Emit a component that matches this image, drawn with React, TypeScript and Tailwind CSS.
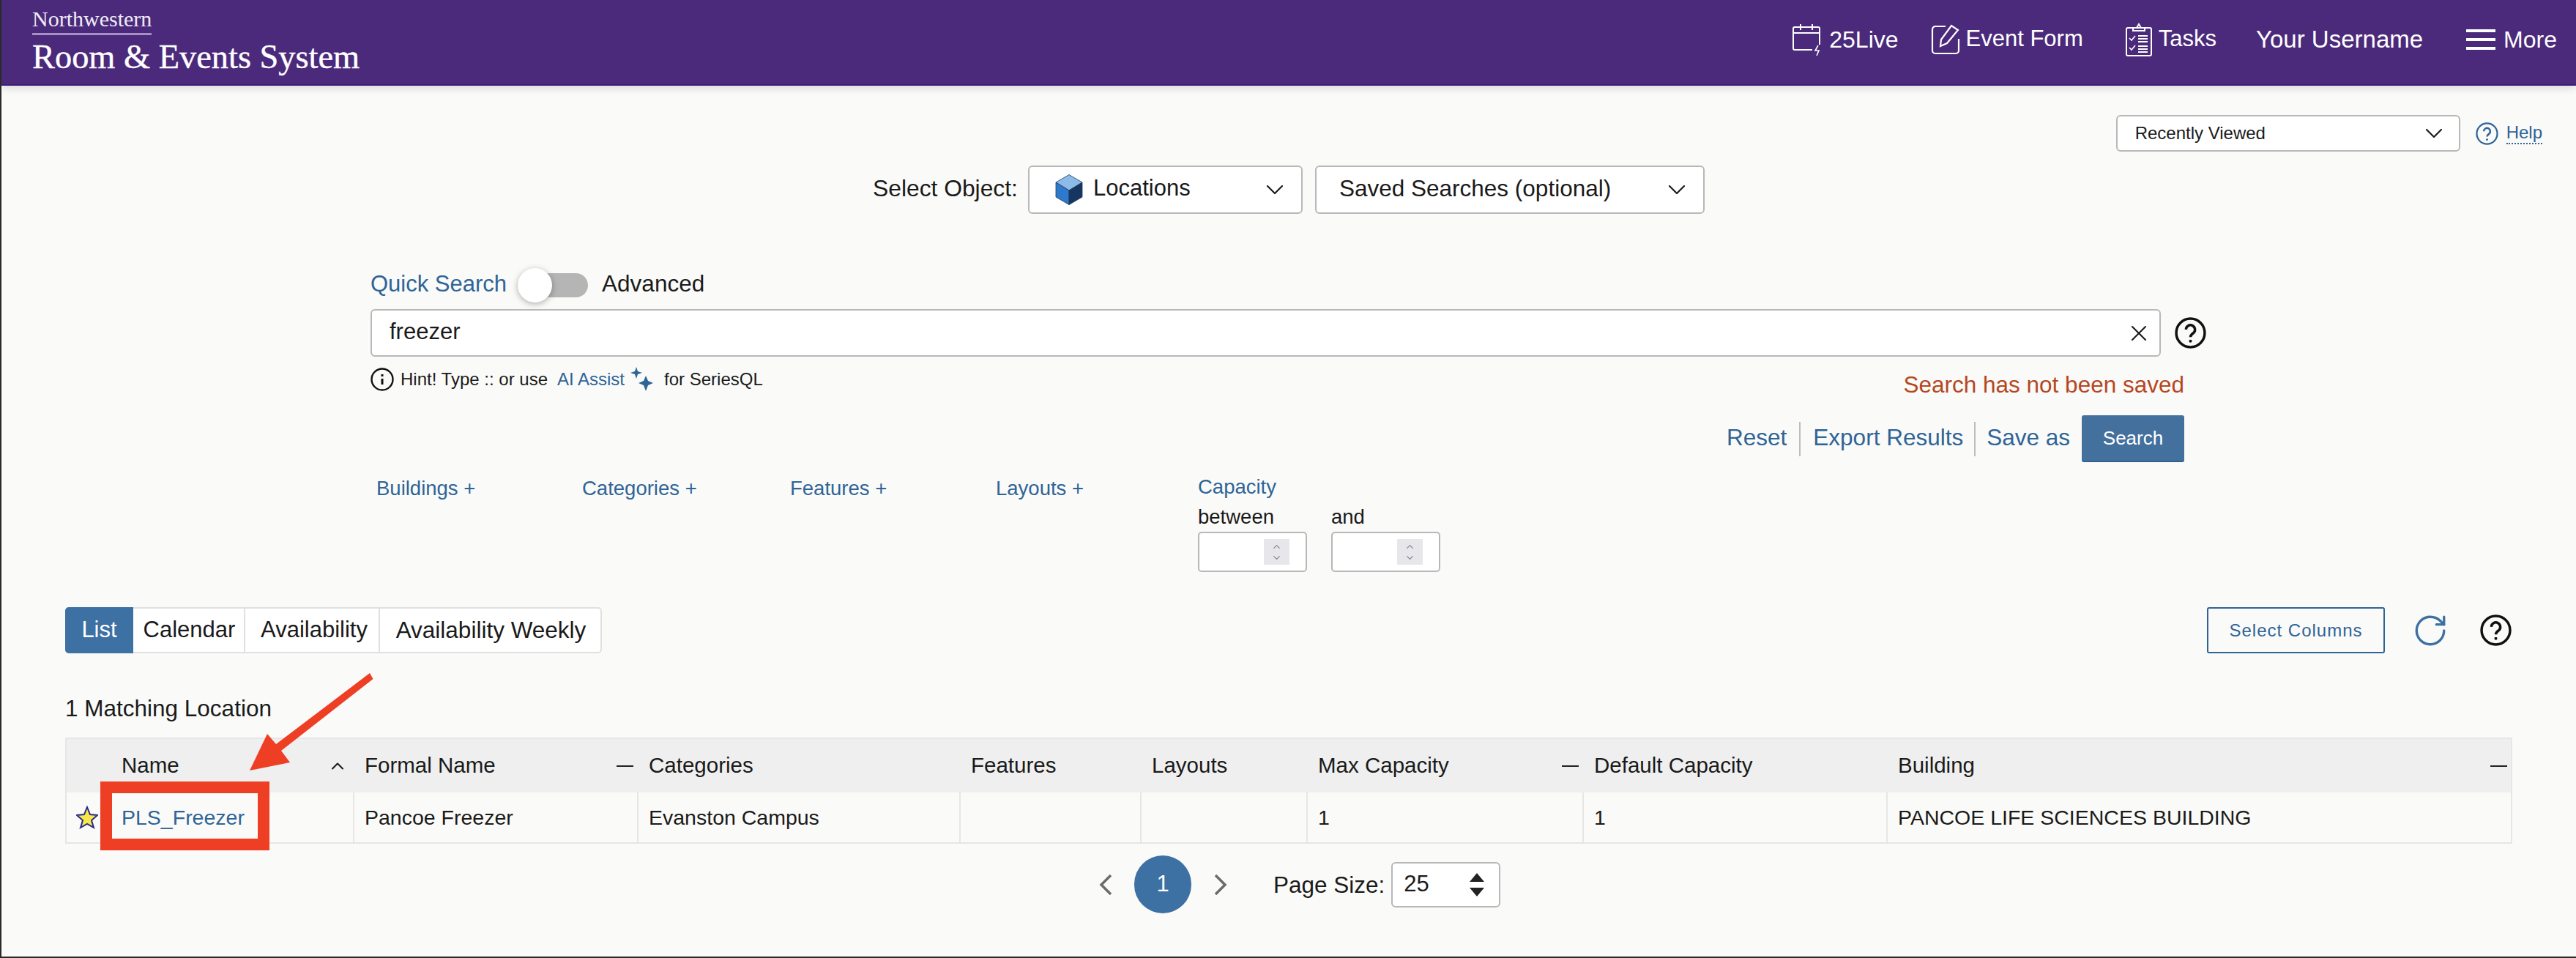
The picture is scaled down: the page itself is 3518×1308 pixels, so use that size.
import React from "react";
import { ChevronDown, ChevronUp, RotateCw, X } from "lucide-react";

function CalendarBolt() {
  return (
    <svg width="42" height="44" viewBox="0 0 42 44" fill="none" stroke="white" strokeWidth="2">
      <path d="M27 36H3a2 2 0 0 1-2-2V7a2 2 0 0 1 2-2h32a2 2 0 0 1 2 2v22" />
      <path d="M1 13h36M11 1v8M27 1v8" />
      <path d="M35 30l-4 7h5l-3 7" strokeWidth="1.6" />
    </svg>
  );
}

function EditBox() {
  return (
    <svg width="42" height="42" viewBox="0 0 42 42" fill="none" stroke="white" strokeWidth="2.2">
      <path d="M20 3H6a4 4 0 0 0-4 4v29a4 4 0 0 0 4 4h28a4 4 0 0 0 4-4V20" />
      <path d="M13 30l1-9L28 2l9 6-15 18z" />
    </svg>
  );
}

function Clipboard() {
  return (
    <svg width="36" height="46" viewBox="0 0 36 46" fill="none" stroke="white" strokeWidth="2">
      <rect x="1" y="7" width="34" height="38" rx="2" />
      <path d="M10 11V7h5l3-5 3 5h5v4z" />
      <path d="M5 21l3 3 5-6M5 34l3 3 5-6" strokeWidth="1.6" />
      <path d="M17 18h13M17 22h13M17 26h13M17 32h13M17 36h13M17 40h13" strokeWidth="1.8" />
    </svg>
  );
}

function Hamburger() {
  return (
    <div className="flex flex-col gap-[8px]">
      <div className="w-[40px] h-[4px] bg-white" />
      <div className="w-[40px] h-[4px] bg-white" />
      <div className="w-[40px] h-[4px] bg-white" />
    </div>
  );
}

function HelpCircle({ size, color, width }: { size: number; color: string; width: number }) {
  return (
    <svg width={size} height={size} viewBox="0 0 42 42" fill="none" stroke={color} strokeWidth={width}>
      <circle cx="21" cy="21" r="19" />
      <path d="M15 16.5a6 6 0 1 1 9.5 5c-2 1.400-3.500 2.500-3.500 5" strokeWidth="3.4" />
      <circle cx="21" cy="32" r="1.200" fill={color} strokeWidth="1.600" />
    </svg>
  );
}

function Cube() {
  return (
    <svg width="38" height="42" viewBox="0 0 38 42">
      <path d="M19 0.500L37 11 19 22 1 11z" fill="#8CBBE8" stroke="#1D3A5F" strokeWidth="0.800" />
      <path d="M1 11l18 11v19.500L1 31z" fill="#2F79CC" stroke="#1D3A5F" strokeWidth="0.800" />
      <path d="M37 11L19 22v19.500L37 31z" fill="#17365F" stroke="#1D3A5F" strokeWidth="0.800" />
    </svg>
  );
}

function Spinner() {
  return (
    <div className="w-[35px] h-[35px] bg-[#E6E6EB] flex flex-col items-center justify-center text-[#85858F]">
      <ChevronUp size={15} strokeWidth={2} />
      <ChevronDown size={15} strokeWidth={2} />
    </div>
  );
}

function NumberInput() {
  return (
    <div className="w-[149px] h-[55px] bg-white border-2 border-[#B8B8B8] rounded-[5px] flex items-center justify-end pr-[22px]">
      <Spinner />
    </div>
  );
}

const columns = [
  { label: "Name", mark: "up" },
  { label: "Formal Name", mark: "dash" },
  { label: "Categories", mark: "" },
  { label: "Features", mark: "" },
  { label: "Layouts", mark: "" },
  { label: "Max Capacity", mark: "dash" },
  { label: "Default Capacity", mark: "" },
  { label: "Building", mark: "dash" },
];

const cells = ["Pancoe Freezer", "Evanston Campus", "", "", "1", "1", "PANCOE LIFE SCIENCES BUILDING"];

export default function App() {
  return (
    <div
      className="relative w-[3518px] h-[1308px] overflow-hidden bg-[#FAFAF8] border-l-2 border-b-2 border-[#2A2A2A] text-[#1A1A1A] text-[31px]"
      style={{ fontFamily: '"Liberation Sans", Arial, sans-serif' }}
    >
      <header className="h-[117px] bg-[#4B2A7B] border-b-2 border-[#3A1C78] shadow-[0_4px_10px_rgba(0,0,0,0.12)] flex justify-between text-white">
        <div className="pl-[42px] pt-[10px]" style={{ fontFamily: '"Liberation Serif", serif' }}>
          <div className="text-[30px] leading-[32px] w-fit text-[#F0EAF6]">
            Northwestern
            <div className="h-[3px] mt-[3px] bg-[#A58FC4]" />
          </div>
          <div className="text-[46.400px] leading-[50px] mt-[5px] [-webkit-text-stroke:0.4px_white]">Room &amp; Events System</div>
        </div>
        <nav className="flex items-center pr-[26px] pb-[8px] text-[31px]">
          <CalendarBolt />
          <span className="ml-[8px] text-[32px]">25Live</span>
          <div className="ml-[44px]"><EditBox /></div>
          <span className="ml-[6px]">Event Form</span>
          <div className="ml-[58px]"><Clipboard /></div>
          <span className="ml-[9px]">Tasks</span>
          <span className="ml-[54px] text-[33px]">Your Username</span>
          <div className="ml-[59px]"><Hamburger /></div>
          <span className="ml-[11px] text-[32px]">More</span>
        </nav>
      </header>

      <div className="flex justify-end items-center pt-[40px] pr-[46px] h-[90px]">
        <div className="w-[470px] h-[50px] bg-white border-2 border-[#B8B8B8] rounded-[6px] flex items-center justify-between pl-[24px] pr-[14px] text-[24px]">
          <span>Recently Viewed</span>
          <ChevronDown size={40} strokeWidth={1.3} />
        </div>
        <div className="ml-[21px] text-[#2F6497]"><HelpCircle size={31} color="#2F6497" width={3} /></div>
        <span className="ml-[11px] text-[24px] text-[#2F6497] border-b-2 border-dotted border-[#2F6497] leading-[28px]">Help</span>
      </div>

      <div className="flex items-center pl-[1190px] mt-[19px] h-[66px]">
        <span className="text-[31.800px] pb-[3px]">Select Object:</span>
        <div className="ml-[14px] w-[375px] h-[66px] bg-white border-2 border-[#B8B8B8] rounded-[6px] flex items-center pl-[35px] pr-[16px]">
          <Cube />
          <span className="ml-[14px] pb-[3px]">Locations</span>
          <ChevronDown size={40} strokeWidth={1.3} className="ml-auto" />
        </div>
        <div className="ml-[17px] w-[532px] h-[66px] bg-white border-2 border-[#B8B8B8] rounded-[6px] flex items-center pl-[31px] pr-[16px]">
          <span className="text-[31.500px] pb-[3px]">Saved Searches (optional)</span>
          <ChevronDown size={40} strokeWidth={1.3} className="ml-auto" />
        </div>
      </div>

      <div className="ml-[504px] w-[2477px] mt-[74px]">
        <div className="flex items-center h-[47px]">
          <span className="text-[#2F6497] pb-[3px]">Quick Search</span>
          <div className="relative ml-[15px] w-[96px] h-[47px] flex items-center justify-end">
            <div className="w-[70px] h-[33px] rounded-full bg-[#B5B5B5]" />
            <div className="absolute left-0 top-0 w-[47px] h-[47px] rounded-full bg-white shadow-[0_2px_8px_rgba(0,0,0,0.3)]" />
          </div>
          <span className="ml-[19px] text-[31.500px] pb-[3px]">Advanced</span>
        </div>
        <div className="flex items-center mt-[9px]">
          <div className="shrink-0 w-[2445px] h-[65px] bg-white border-2 border-[#B8B8B8] rounded-[6px] flex items-center justify-between pl-[24px] pr-[10px]">
            <span className="pb-[3px]">freezer</span>
            <X size={36} strokeWidth={1.4} />
          </div>
          <div className="ml-[19px] shrink-0"><HelpCircle size={43} color="#111111" width={3.4} /></div>
        </div>
        <div className="flex items-start justify-between mt-[15px] h-[65px] w-[2477px]">
          <div className="flex items-center text-[24px] h-[32px]">
            <svg width="32" height="32" viewBox="0 0 32 32" fill="none" stroke="#111111" strokeWidth="2.4">
              <circle cx="16" cy="16" r="14.500" />
              <path d="M16 15v8M16 9v3" strokeWidth="3" />
            </svg>
            <span className="ml-[9px]">Hint! Type :: or use</span>
            <span className="ml-[13px] text-[#2F6497]">AI Assist</span>
            <svg className="ml-[7px]" width="34" height="34" viewBox="0 0 34 34" fill="#2F6497">
              <path d="M9 0l2 6 6 2-6 2-2 6-2-6-6-2 6-2z" />
              <path d="M22 12l3 7 7 3-7 3-3 8-3-8-7-3 7-3z" />
            </svg>
            <span className="ml-[13px]">for SeriesQL</span>
          </div>
          <span className="text-[31.500px] text-[#B5471F]">Search has not been saved</span>
        </div>
        <div className="flex items-center justify-end h-[64px] text-[31.500px]">
          <span className="text-[#2F6497] pb-[3px]">Reset</span>
          <div className="mx-[17px] w-[2px] h-[47px] bg-[#BDBDBD]" />
          <span className="text-[#2F6497] pb-[3px]">Export Results</span>
          <div className="mx-[15px] w-[2px] h-[47px] bg-[#BDBDBD]" />
          <span className="text-[#2F6497] pb-[3px]">Save as</span>
          <div className="ml-[16px] w-[140px] h-[64px] bg-[#44709E] border-b-2 border-[#2F5F93] rounded-[3px] flex items-center justify-center text-white text-[26px]">
            Search
          </div>
        </div>
      </div>

      <div className="flex items-start ml-[512px] mt-[19px] text-[27.500px] leading-[30px] text-[#2F6497]">
        <span className="w-[281px] mt-[2px]">Buildings +</span>
        <span className="w-[284px] mt-[2px]">Categories +</span>
        <span className="w-[281px] mt-[2px]">Features +</span>
        <span className="w-[276px] mt-[2px]">Layouts +</span>
        <div>
          <div>Capacity</div>
          <div className="flex gap-[33px] text-[#1A1A1A] mt-[11px]">
            <div>
              <div>between</div>
              <div className="mt-[5px]"><NumberInput /></div>
            </div>
            <div>
              <div>and</div>
              <div className="mt-[5px]"><NumberInput /></div>
            </div>
          </div>
        </div>
      </div>

      <div className="flex items-center ml-[87px] w-[3341px] mt-[48px]">
        <div className="flex h-[63px] bg-white border-2 border-[#E0E0E0] rounded-[5px]">
          <div className="w-[93px] -m-[2px] h-[63px] bg-[#3D70A3] text-white rounded-l-[5px] flex items-center justify-center">List</div>
          <div className="w-[153px] ml-[2px] pl-[2px] border-r-2 border-[#E0E0E0] flex items-center justify-center">Calendar</div>
          <div className="w-[184px] pl-[6px] border-r-2 border-[#E0E0E0] flex items-center justify-center">Availability</div>
          <div className="w-[301px] pl-[2px] flex items-center justify-center text-[31.500px]">Availability Weekly</div>
        </div>
        <div className="ml-auto w-[243px] h-[63px] border-2 border-[#2F6497] rounded-[3px] flex items-center justify-center text-[24px] text-[#2F6497] tracking-[1px]">
          Select Columns
        </div>
        <RotateCw className="ml-[37px]" size={50} strokeWidth={1.6} color="#3D70A3" />
        <div className="ml-[43px]"><HelpCircle size={43} color="#111111" width={3.4} /></div>
      </div>

      <div className="ml-[87px] mt-[57px] leading-[36px] text-[31.500px]">1 Matching Location</div>

      <div className="ml-[87px] w-[3342px] mt-[22px] border-2 border-[#E6E6E6]">
        <div className="grid grid-cols-[391px_388px_440px_247px_227px_377px_415px_853px] h-[73px] bg-[#EFEFEF] text-[29.500px]">
          {columns.map((c, i) => (
            <div key={c.label} className={`flex items-center justify-between pr-[5px] ${i === 0 ? "pl-[75px]" : "pl-[16px]"}`}>
              <span>{c.label}</span>
              {c.mark === "up" && <ChevronUp size={28} strokeWidth={1.8} className="mr-[2px]" />}
              {c.mark === "dash" && <div className="w-[23px] h-[2px] bg-[#222222]" />}
            </div>
          ))}
        </div>
        <div className="grid grid-cols-[391px_388px_440px_247px_227px_377px_415px_853px] h-[68px] text-[28.500px]">
          <div className="flex items-center pl-[13px]">
            <svg width="30" height="32" viewBox="0 0 30 32">
              <path d="M15 2l4 10 10 1-8 7 3 10-9-5-9 5 3-10-8-7 10-1z" fill="#F7E84A" stroke="#2B2B8C" strokeWidth="2" />
            </svg>
            <span className="ml-[32px] text-[#2F6497]">PLS_Freezer</span>
          </div>
          {cells.map((t, i) => (
            <div key={i} className="flex items-center pl-[14px] border-l-2 border-[#E6E6E6]">{t}</div>
          ))}
        </div>
      </div>

      <div className="flex items-center h-[79px] mt-[16px] pl-[1499px]">
        <svg width="18" height="28" viewBox="0 0 18 28" fill="none" stroke="#6B6B6B" strokeWidth="3.500">
          <path d="M16 1L3 14l13 13" />
        </svg>
        <div className="ml-[30px] w-[78px] h-[79px] rounded-full bg-[#3D70A3] text-white flex items-center justify-center">1</div>
        <svg className="ml-[31px]" width="18" height="28" viewBox="0 0 18 28" fill="none" stroke="#6B6B6B" strokeWidth="3.500">
          <path d="M2 1l13 13L2 27" />
        </svg>
        <span className="ml-[63px] pt-[3px] text-[31.500px]">Page Size:</span>
        <div className="ml-[9px] w-[149px] h-[62px] bg-white border-2 border-[#B8B8B8] rounded-[6px] flex items-center justify-between pl-[15px] pr-[20px]">
          <span>25</span>
          <svg width="20" height="32" viewBox="0 0 20 32" fill="#222222">
            <path d="M10 0l10 12H0zM10 32L0 20h20z" />
          </svg>
        </div>
      </div>

      {/* annotation drawn on top of the table */}
      <div className="absolute left-[135px] top-[1067px] w-[231px] h-[94px] border-[16px] border-[#EE3F24]" />
      <svg className="absolute left-[335px] top-[915px]" width="180" height="145" viewBox="0 0 180 145" fill="#EE3F24">
        <path d="M4 137L28 87l12 14L168 4l4.500 8L47 110l12 16z" />
      </svg>
    </div>
  );
}
